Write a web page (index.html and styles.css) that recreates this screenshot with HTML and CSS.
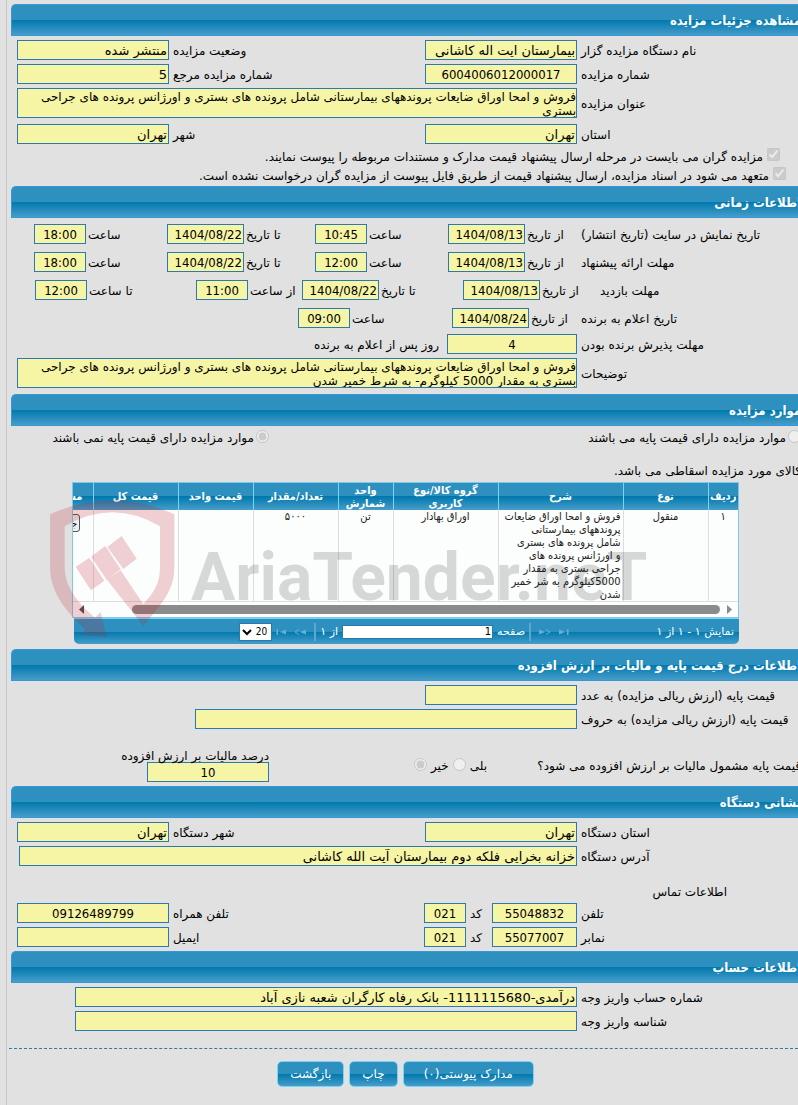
FILE: index.html
```html
<!DOCTYPE html>
<html lang="fa">
<head>
    <meta charset="UTF-8">
    <meta name="viewport" content="width=device-width, initial-scale=1.0">
    <title>مشاهده جزئیات مزایده</title>
    <link rel="stylesheet" href="styles.css">
</head>
<body>
<main class="page" dir="rtl">

    <section>
        <h2 class="title">مشاهده جزئیات مزایده</h2>
        <div class="form">
            <div class="row pair">
                <label for="organ">نام دستگاه مزایده گزار</label>
                <input type="text" id="organ" value="بیمارستان ایت اله کاشانی" readonly>
                <label for="status">وضعیت مزایده</label>
                <input type="text" id="status" value="منتشر شده" readonly>
            </div>
            <div class="row pair">
                <label for="number">شماره مزایده</label>
                <input type="text" id="number" class="center" value="6004006012000017" readonly>
                <label for="refNumber">شماره مزایده مرجع</label>
                <input type="text" id="refNumber" value="5" readonly>
            </div>
            <div class="row single">
                <label for="subject">عنوان مزایده</label>
                <textarea id="subject" readonly>فروش و امحا اوراق ضایعات پروندههای بیمارستانی شامل پرونده های بستری و اورژانس پرونده های جراحی بستری</textarea>
            </div>
            <div class="row pair after-area">
                <label for="province">استان</label>
                <input type="text" id="province" value="تهران" readonly>
                <label for="city">شهر</label>
                <input type="text" id="city" value="تهران" readonly>
            </div>
            <div class="check first">
                <input type="checkbox" id="attach" checked disabled>
                <label for="attach">مزایده گران می بایست در مرحله ارسال پیشنهاد قیمت مدارک و مستندات مربوطه را پیوست نمایند.</label>
            </div>
            <div class="check">
                <input type="checkbox" id="commit" checked disabled>
                <label for="commit">متعهد می شود در اسناد مزایده، ارسال پیشنهاد قیمت از طریق فایل پیوست از مزایده گران درخواست نشده است.</label>
            </div>
        </div>
    </section>

    <section>
        <h2 class="title">اطلاعات زمانی</h2>
        <div class="form times">
            <div class="row range">
                <span class="label">تاریخ نمایش در سایت (تاریخ انتشار)</span>
                <label for="showFrom">از تاریخ</label>
                <input type="text" id="showFrom" value="1404/08/13" readonly>
                <label for="showFromTime">ساعت</label>
                <input type="text" id="showFromTime" class="center" value="10:45" readonly>
                <label for="showTo">تا تاریخ</label>
                <input type="text" id="showTo" value="1404/08/22" readonly>
                <label for="showToTime">ساعت</label>
                <input type="text" id="showToTime" class="center" value="18:00" readonly>
            </div>
            <div class="row range">
                <span class="label">مهلت ارائه پیشنهاد</span>
                <label for="offerFrom">از تاریخ</label>
                <input type="text" id="offerFrom" value="1404/08/13" readonly>
                <label for="offerFromTime">ساعت</label>
                <input type="text" id="offerFromTime" class="center" value="12:00" readonly>
                <label for="offerTo">تا تاریخ</label>
                <input type="text" id="offerTo" value="1404/08/22" readonly>
                <label for="offerToTime">ساعت</label>
                <input type="text" id="offerToTime" class="center" value="18:00" readonly>
            </div>
            <div class="row range visit">
                <span class="label">مهلت بازدید</span>
                <label for="visitFrom">از تاریخ</label>
                <input type="text" id="visitFrom" value="1404/08/13" readonly>
                <label for="visitTo">تا تاریخ</label>
                <input type="text" id="visitTo" value="1404/08/22" readonly>
                <label for="visitFromTime">از ساعت</label>
                <input type="text" id="visitFromTime" class="center" value="11:00" readonly>
                <label for="visitToTime">تا ساعت</label>
                <input type="text" id="visitToTime" class="center" value="12:00" readonly>
            </div>
            <div class="row range winner">
                <span class="label">تاریخ اعلام به برنده</span>
                <label for="winnerDate">از تاریخ</label>
                <input type="text" id="winnerDate" value="1404/08/24" readonly>
                <label for="winnerTime">ساعت</label>
                <input type="text" id="winnerTime" class="center" value="09:00" readonly>
            </div>
            <div class="row accept">
                <label for="acceptDays">مهلت پذیرش برنده بودن</label>
                <input type="text" id="acceptDays" class="center" value="4" readonly>
                <span class="suffix">روز پس از اعلام به برنده</span>
            </div>
            <div class="row single">
                <label for="notes">توضیحات</label>
                <textarea id="notes" readonly>فروش و امحا اوراق ضایعات پروندههای بیمارستانی شامل پرونده های بستری و اورژانس پرونده های جراحی بستری به مقدار 5000 کیلوگرم- به شرط خمیر شدن</textarea>
            </div>
        </div>
    </section>

    <section class="items">
        <h2 class="title">موارد مزایده</h2>
        <div class="base-price">
            <div class="option">
                <input type="radio" name="basePrice" id="hasBase" disabled>
                <label for="hasBase">موارد مزایده دارای قیمت پایه می باشند</label>
            </div>
            <div class="option">
                <input type="radio" name="basePrice" id="noBase" checked disabled>
                <label for="noBase">موارد مزایده دارای قیمت پایه نمی باشند</label>
            </div>
        </div>
        <p class="hint">کالای مورد مزایده اسقاطی می باشد.</p>

        <div class="grid">
            <div class="grid-view">
                <table>
                    <colgroup>
                        <col class="w-row"><col class="w-mid"><col class="w-desc"><col class="w-group"><col class="w-unit"><col class="w-mid"><col class="w-price"><col class="w-mid"><col class="w-mid">
                    </colgroup>
                    <thead>
                        <tr>
                            <th>ردیف</th>
                            <th>نوع</th>
                            <th>شرح</th>
                            <th>گروه کالا/نوع کاربری</th>
                            <th>واحد شمارش</th>
                            <th>تعداد/مقدار</th>
                            <th>قیمت واحد</th>
                            <th>قیمت کل</th>
                            <th class="docs">مستندات</th>
                        </tr>
                    </thead>
                    <tbody>
                        <tr>
                            <td>۱</td>
                            <td>منقول</td>
                            <td class="desc">فروش و امحا اوراق ضایعات<br>پروندههای بیمارستانی<br>شامل پرونده های بستری<br>و اورژانس پرونده های<br>جراحی بستری به مقدار<br>5000کیلوگرم به شر خمیر<br>شدن</td>
                            <td>اوراق بهادار</td>
                            <td>تن</td>
                            <td>۵۰۰۰</td>
                            <td></td>
                            <td></td>
                            <td><button type="button" class="details">جزئیات</button></td>
                        </tr>
                    </tbody>
                </table>
                <div class="scroll">
                    <svg width="6" height="9" viewBox="0 0 6 9"><path d="M0 0 L5 4.5 L0 9 Z" fill="#8b8b8b"/></svg>
                    <span class="thumb"></span>
                    <svg width="6" height="9" viewBox="0 0 6 9"><path d="M6 0 L1 4.5 L6 9 Z" fill="#505050"/></svg>
                </div>
            </div>
            <div class="pager">
                <span class="info">نمایش ۱ - ۱ از ۱</span>
                <div class="pager-nav">
                    <svg width="10" height="6" viewBox="0 0 10 6"><path d="M0 0.5 L6 3 L0 5.5 Z M8 0 H9.5 V6 H8 Z" fill="#62b0d6"/></svg>
                    <svg class="step" width="12" height="6" viewBox="0 0 12 6"><path d="M0 0.5 L6 3 L0 5.5 Z" fill="#62b0d6"/><path d="M7 0.5 L11 3 L7 5.5" fill="none" stroke="#62b0d6"/></svg>
                    <span class="sep"></span>
                    <label for="pageNo">صفحه</label>
                    <input type="text" id="pageNo" value="1">
                    <span>از ۱</span>
                    <span class="sep"></span>
                    <svg class="step" width="12" height="6" viewBox="0 0 12 6"><path d="M12 0.5 L6 3 L12 5.5 Z" fill="#62b0d6"/><path d="M5 0.5 L1 3 L5 5.5" fill="none" stroke="#62b0d6"/></svg>
                    <svg width="10" height="6" viewBox="0 0 10 6"><path d="M10 0.5 L4 3 L10 5.5 Z M0.5 0 H2 V6 H0.5 Z" fill="#62b0d6"/></svg>
                    <select aria-label="تعداد در صفحه">
                        <option>20</option>
                    </select>
                </div>
            </div>
        </div>

        <div class="watermark" dir="ltr">
            <svg class="shield" width="127" height="143" viewBox="150 140 381 429">
                <g fill="#be1e2d">
                    <path fill-rule="evenodd" d="M150 192 Q337 108 523 192 V350 C523 425 480 465 430 527 L320 387 L362 360 L430 462 C462 425 480 400 480 350 V228 Q337 144 194 228 V350 C194 410 235 460 285 502 L302 485 L320 560 L240 553 L256 538 C205 490 150 430 150 350 Z"/>
                    <path d="M365 257 L410 325 L370 356 L322 290 Z"/>
                    <path d="M316 287 L362 357 L320 388 L273 319 Z"/>
                    <path d="M268 322 L313 391 L273 420 L227 350 Z"/>
                </g>
            </svg>
            <span class="brand">AriaTender.neT</span>
        </div>
    </section>

    <section>
        <h2 class="title">اطلاعات درج قیمت پایه و مالیات بر ارزش افزوده</h2>
        <div class="form">
            <div class="row pair">
                <label for="priceNum">قیمت پایه (ارزش ریالی مزایده) به عدد</label>
                <input type="text" id="priceNum" readonly>
            </div>
            <div class="row words">
                <label for="priceWords">قیمت پایه (ارزش ریالی مزایده) به حروف</label>
                <input type="text" id="priceWords" readonly>
            </div>
            <div class="tax">
                <span class="question">قیمت پایه مشمول مالیات بر ارزش افزوده می شود؟</span>
                <div class="answers">
                    <label for="taxYes">بلی</label>
                    <input type="radio" name="tax" id="taxYes" disabled>
                    <label for="taxNo">خیر</label>
                    <input type="radio" name="tax" id="taxNo" checked disabled>
                </div>
                <div class="percent">
                    <label for="taxPercent">درصد مالیات بر ارزش افزوده</label>
                    <input type="text" id="taxPercent" class="center" value="10" readonly>
                </div>
            </div>
        </div>
    </section>

    <section>
        <h2 class="title">نشانی دستگاه</h2>
        <div class="form">
            <div class="row pair">
                <label for="orgProvince">استان دستگاه</label>
                <input type="text" id="orgProvince" value="تهران" readonly>
                <label for="orgCity">شهر دستگاه</label>
                <input type="text" id="orgCity" value="تهران" readonly>
            </div>
            <div class="row single address">
                <label for="address">آدرس دستگاه</label>
                <input type="text" id="address" value="خزانه بخرایی فلکه دوم بیمارستان آیت الله کاشانی" readonly>
            </div>
            <h3 class="contact-title">اطلاعات تماس</h3>
            <div class="row contact">
                <label for="phone">تلفن</label>
                <input type="text" id="phone" class="center" value="55048832" readonly>
                <label for="phoneCode">کد</label>
                <input type="text" id="phoneCode" class="center" value="021" readonly>
                <label for="mobile">تلفن همراه</label>
                <input type="text" id="mobile" class="center" value="09126489799" readonly>
            </div>
            <div class="row contact">
                <label for="fax">نمابر</label>
                <input type="text" id="fax" class="center" value="55077007" readonly>
                <label for="faxCode">کد</label>
                <input type="text" id="faxCode" class="center" value="021" readonly>
                <label for="email">ایمیل</label>
                <input type="text" id="email" readonly>
            </div>
        </div>
    </section>

    <section>
        <h2 class="title">اطلاعات حساب</h2>
        <div class="form account">
            <div class="row single">
                <label for="account">شماره حساب واریز وجه</label>
                <input type="text" id="account" value="درآمدی-1111115680- بانک رفاه کارگران شعبه نازی آباد" readonly>
            </div>
            <div class="row single">
                <label for="payId">شناسه واریز وجه</label>
                <input type="text" id="payId" readonly>
            </div>
        </div>
    </section>

    <div class="actions">
        <button type="button" class="btn wide">مدارک پیوستی(۰)</button>
        <button type="button" class="btn">چاپ</button>
        <button type="button" class="btn">بازگشت</button>
    </div>
</main>
</body>
</html>
```

FILE: styles.css
```css
* {
    box-sizing: border-box;
}
body {
    margin: 0;
    background-color: #e1e1e1;
    color: #000;
    font-family: "DejaVu Sans", Tahoma, sans-serif;
    font-size: 12px;
    line-height: 14px;
    overflow-x: hidden;
}
input, textarea, select, button {
    font-family: inherit;
    margin: 0;
}
.page {
    margin-left: 6px;
    padding: 4px 0 18px 4px;
    border-left: 1px solid #c8c8c8;
}

/* section headers */
.title {
    height: 32px;
    margin: 0;
    padding-top: 2px;
    border: 1px solid #3498db;
    border-right: none;
    border-radius: 5px 0 0 0;
    background: linear-gradient(#2e90bf 0, #2e90bf 50%, #0078ae 50%, #469dc9 100%);
    color: #fff;
    font-family: "DejaVu Sans Condensed", "DejaVu Sans", Tahoma, sans-serif;
    font-size: 13px;
    font-weight: bold;
    line-height: 28px;
    text-indent: -3px;
    white-space: nowrap;
    overflow: hidden;
}

/* form rows */
.form {
    display: flex;
    flex-direction: column;
    gap: 4px;
    padding: 4px 0 4px 6px;
}
.row {
    display: grid;
    align-items: center;
}
.row label,
.row .label {
    padding-top: 2px;
    padding-left: 4px;
    text-align: left;
    white-space: nowrap;
}
.pair {
    grid-template-columns: 221px 152px 1fr 152px;
}
.single {
    grid-template-columns: 221px 1fr;
}
.words {
    grid-template-columns: 221px 382px;
}
.address {
    padding-left: 2px;
}
.after-area {
    margin-top: 2px;
}
input[type="text"],
textarea {
    display: block;
    width: 100%;
    height: 20px;
    padding: 0 1px;
    border: 1px solid #2a7ab0;
    border-radius: 0;
    background-color: #f6f4a5;
    color: #000;
    font-size: 13px;
}
textarea {
    height: 30px;
    padding: 1px 0;
    font-size: 12px;
    line-height: 14px;
    resize: none;
    overflow: hidden;
}
input.center,
.range input[type="text"] {
    font-family: "DejaVu Sans Condensed", "DejaVu Sans", Tahoma, sans-serif;
}
input.center {
    text-align: center;
}

input[type="checkbox"],
input[type="radio"] {
    width: 13px;
    height: 13px;
    flex: none;
}
.check {
    display: flex;
    align-items: center;
    gap: 4px;
    height: 15px;
    padding-right: 12px;
    white-space: nowrap;
}
.check input {
    margin-bottom: 2px;
}
.check label {
    padding-top: 2px;
}
.check.first {
    padding-right: 18px;
}

/* date and time rows */
.times {
    gap: 8px;
    padding-top: 6px;
    padding-bottom: 6px;
}
.range {
    grid-template-columns: 221px 52px 77px 81px 52px 71px 77px 81px 52px;
}
.range label {
    padding-left: 2px;
}
.visit {
    grid-template-columns: 202px 56px 77px 84px 77px 54px 52px 109px 52px;
}
.winner {
    grid-template-columns: 221px 48px 77px 102px 52px;
}
.accept {
    grid-template-columns: 221px 130px 1fr;
    margin-top: -2px;
}
.suffix {
    padding: 2px 8px 0 0;
}
.times .single {
    margin-top: -4px;
}

/* items */
.items {
    position: relative;
    padding-bottom: 5px;
}
.base-price {
    display: grid;
    grid-template-columns: 529px 1fr;
    margin-top: 4px;
}
.option {
    display: flex;
    gap: 2px;
    white-space: nowrap;
}
.option label {
    padding-top: 1px;
}
.option:first-child {
    margin-right: -3px;
}
.hint {
    margin: 19px -3px 4px 0;
}
.grid {
    margin: 0 59px 0 61px;
    font-size: 11px;
}
.grid-view {
    border: 1px solid #7ec8ea;
    background-color: #fcfdfd;
    font-family: "DejaVu Sans Condensed", "DejaVu Sans", Tahoma, sans-serif;
    overflow: hidden;
}
.grid table {
    width: 730px;
    border-collapse: collapse;
    table-layout: fixed;
}
.w-row { width: 30px; }
.w-mid { width: 85px; }
.w-desc { width: 125px; }
.w-group { width: 105px; }
.w-unit { width: 55px; }
.w-price { width: 75px; }
.grid th {
    height: 27px;
    padding: 0 1px;
    border-left: 1px solid #77d5f7;
    background: linear-gradient(#2e90bf 0, #2e90bf 50%, #0078ae 50%, #469dc9 100%);
    color: #fff;
    line-height: 13px;
}
.grid th.docs {
    padding-right: 10px;
    text-align: right;
}
.grid td {
    height: 91px;
    padding: 0 2px;
    border-left: 1px solid #ddd;
    border-bottom: 1px solid #ddd;
    color: #222;
    line-height: 13px;
    text-align: center;
    vertical-align: top;
}
.grid td.desc {
    padding-left: 0;
    text-align: right;
    white-space: nowrap;
}
.details {
    width: 59px;
    height: 18px;
    margin-top: 4px;
    padding: 0 2px;
    border: 1px solid #555;
    border-radius: 3px;
    background-color: #efefef;
    font-size: 10px;
    text-align: right;
}
.scroll {
    display: flex;
    align-items: center;
    gap: 7px;
    height: 15px;
    padding: 0 5px;
}
.thumb {
    flex: 1;
    height: 9px;
    margin-left: 41px;
    border-radius: 5px;
    background-color: #8b8b8b;
}
.pager {
    display: flex;
    align-items: center;
    height: 26px;
    margin-left: 2px;
    padding: 0 5px;
    border-top: 1px solid #77d5f7;
    border-radius: 0 0 5px 5px;
    background: linear-gradient(#2e90bf 0, #2e90bf 50%, #0078ae 50%, #469dc9 100%);
    color: #fff;
    white-space: nowrap;
}
.info {
    width: 165px;
}
.pager-nav {
    display: flex;
    align-items: center;
    gap: 4px;
}
.pager-nav .step {
    margin: 0 4px;
}
.pager-nav .sep {
    width: 2px;
    height: 18px;
    background-color: #5da7cf;
}
.pager-nav input[type="text"] {
    width: 151px;
    height: 14px;
    background-color: #fff;
    font-size: 10px;
}
.pager-nav select {
    width: 33px;
    height: 18px;
    padding: 0;
    border: 1px solid #2a7ab0;
    background-color: #fff;
    color: #000;
    font-family: "DejaVu Sans Condensed", "DejaVu Sans", Tahoma, sans-serif;
    font-size: 10px;
}

.watermark {
    position: absolute;
    top: 103px;
    left: 39px;
    display: flex;
    align-items: flex-start;
    gap: 14px;
    pointer-events: none;
}
.shield {
    opacity: 0.2;
}
.brand {
    color: rgba(0, 0, 0, 0.15);
    font-family: Roboto, sans-serif;
    font-size: 66px;
    font-weight: bold;
    line-height: 162px;
}

/* tax */
.tax {
    display: flex;
    align-items: flex-start;
    margin-top: 16px;
    white-space: nowrap;
}
.question {
    width: 314px;
    margin-right: -3px;
    padding-top: 10px;
}
.answers {
    display: flex;
    gap: 4px;
    width: 218px;
    padding-top: 9px;
}
.answers label {
    padding-top: 1px;
}
.percent {
    width: 122px;
}
.percent label {
    display: block;
    height: 13px;
}

/* contact */
.contact-title {
    margin: 16px 71px 0 0;
    font-size: 12px;
    font-weight: normal;
    line-height: 13px;
}
.contact {
    grid-template-columns: 221px 85px 26px 42px 1fr 152px;
}
.account {
    padding-left: 64px;
}

/* buttons */
.actions {
    display: flex;
    justify-content: center;
    gap: 5px;
    margin: 13px 0 0 -2px;
    padding: 12px 0 0 4px;
    border-top: 1px dashed #2a7ab0;
}
.btn {
    height: 26px;
    padding: 0 12px;
    border: 1px solid #77d5f7;
    border-radius: 5px;
    background: linear-gradient(#2e90bf 0, #2e90bf 50%, #0078ae 50%, #469dc9 100%);
    color: #fff;
    font-size: 12px;
    cursor: pointer;
}
.btn.wide {
    padding: 0 20px;
}
```
